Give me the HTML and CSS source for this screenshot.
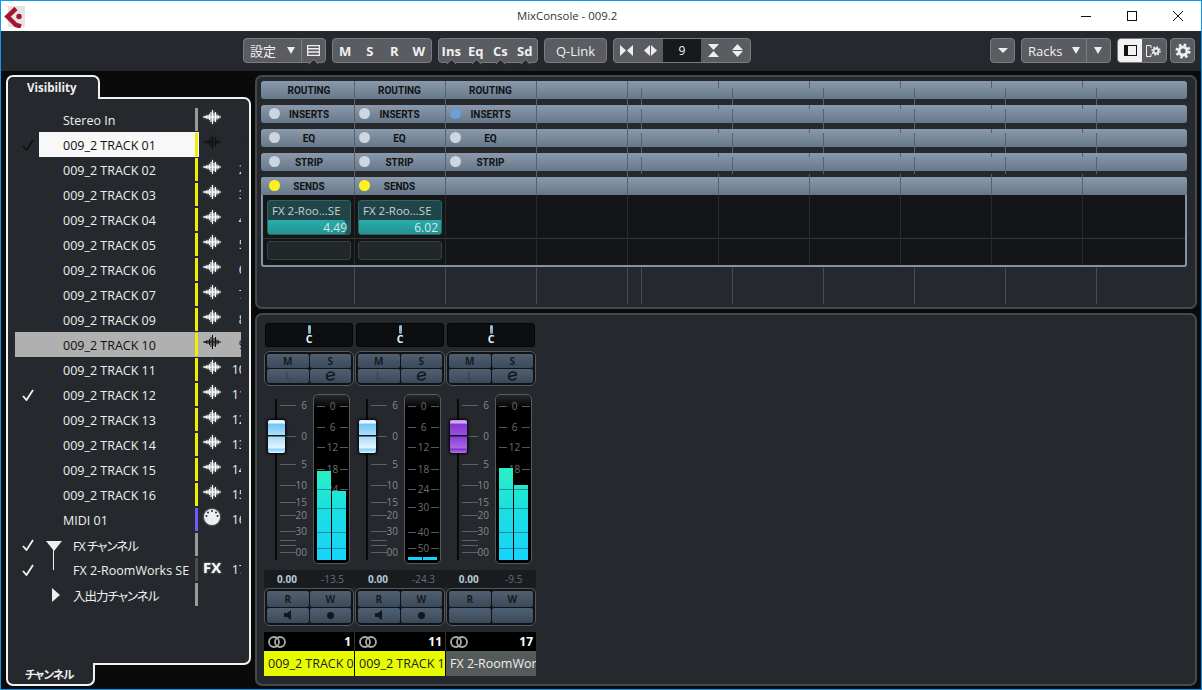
FILE: index.html
```html
<!DOCTYPE html>
<html lang="ja">
<head>
    <meta charset="UTF-8">
    <title>MixConsole - 009.2</title>
    <link rel="stylesheet" href="styles.css">
</head>
<body>
    <svg class="defs" width="0" height="0">
        <symbol id="wave" viewBox="0 0 18 14">
            <path d="M0 7H18M2 6v2M3.500 5.500v3M5 5v4M6.500 4v6M8 2v10M9.500 0v14M11 3v8M12.500 2v10M14 4.500v5M15.500 5.500v3" fill="none" stroke="currentColor" stroke-width="1"/>
        </symbol>
        <symbol id="check" viewBox="0 0 12 12">
            <path d="M1 7l3.500 4L11 1" fill="none" stroke="currentColor" stroke-width="1.800"/>
        </symbol>
        <symbol id="link" viewBox="0 0 18 12">
            <circle cx="6" cy="6" r="5" fill="none" stroke="#aaa" stroke-width="1.800"/>
            <circle cx="12" cy="6" r="5" fill="none" stroke="#aaa" stroke-width="1.800"/>
        </symbol>
        <symbol id="edit" viewBox="0 0 14 12">
            <path d="M3 6.500L12 4.500C12 2.500 10 1 8 1C4.500 1 2 3.500 2 6.500C2 9.500 4 11 7 11C9 11 10.500 10 12 8.500" fill="none" stroke="#14181c" stroke-width="2"/>
        </symbol>
        <symbol id="gear" viewBox="0 0 16 16">
            <circle cx="8" cy="8" r="4" fill="none" stroke="currentColor" stroke-width="3"/>
            <circle cx="8" cy="8" r="6.300" fill="none" stroke="currentColor" stroke-width="2.600" stroke-dasharray="2.500 2.450"/>
        </symbol>
    </svg>

    <div class="window">
        <div class="titlebar">
            <svg class="logo" width="22" height="22" viewBox="0 0 22 22">
                <rect x="4" y="0" width="17" height="21" fill="#e4e4e4"/>
                <path d="M12 2.500L3.500 10.500L12 19L17 20.500" fill="none" stroke="#a6142f" stroke-width="4.500"/>
                <circle cx="15" cy="10.500" r="2.700" fill="#a6142f"/>
            </svg>
            <div class="title">MixConsole - 009.2</div>
            <div class="win-controls">
                <div class="win-btn"><svg width="10" height="10"><path d="M0 5.500H10" stroke="#111"/></svg></div>
                <div class="win-btn"><svg width="10" height="10"><rect x=".5" y=".5" width="9" height="9" fill="none" stroke="#111"/></svg></div>
                <div class="win-btn"><svg width="10" height="10"><path d="M0 0L10 10M10 0L0 10" stroke="#111"/></svg></div>
            </div>
        </div>

        <div class="toolbar">
            <div class="tb-group">
                <div class="tb-cell tb-preset">設定 <span class="tri"></span></div>
                <div class="tb-cell tb-narrow tb-split notch">
                    <svg width="13" height="11"><path d="M.5.500h12v10H.500zM.500 3.800h12M.500 7h12" fill="none" stroke="#eee" stroke-width="1.500"/></svg>
                </div>
            </div>
            <div class="tb-group">
                <div class="tb-cell tb-narrow">M</div>
                <div class="tb-cell tb-narrow">S</div>
                <div class="tb-cell tb-narrow">R</div>
                <div class="tb-cell tb-narrow">W</div>
            </div>
            <div class="tb-group">
                <div class="tb-cell tb-narrow notch">Ins</div>
                <div class="tb-cell tb-narrow notch">Eq</div>
                <div class="tb-cell tb-narrow notch">Cs</div>
                <div class="tb-cell tb-narrow notch">Sd</div>
            </div>
            <div class="tb-group">
                <div class="tb-cell tb-qlink">Q-Link</div>
            </div>
            <div class="tb-group">
                <div class="tb-cell tb-narrow"><svg width="13" height="11"><path d="M0 0l6 5.500L0 11zM13 0L7 5.500l6 5.500z" fill="#eee"/></svg></div>
                <div class="tb-cell tb-narrow"><svg width="13" height="11"><path d="M6 0L0 5.500 6 11zM7 0l6 5.500L7 11z" fill="#eee"/></svg></div>
                <div class="tb-count">9</div>
                <div class="tb-cell tb-narrow"><svg width="11" height="13"><path d="M0 0h11L5.500 6zM0 13h11L5.500 7z" fill="#eee"/></svg></div>
                <div class="tb-cell tb-narrow"><svg width="11" height="13"><path d="M0 6h11L5.500 0zM0 7h11l-5.500 6z" fill="#eee"/></svg></div>
            </div>

            <div class="tb-right">
                <div class="tb-group">
                    <div class="tb-cell tb-single"><span class="tri tri-wide"></span></div>
                </div>
                <div class="tb-group">
                    <div class="tb-cell tb-racks">Racks <span class="tri"></span></div>
                    <div class="tb-cell tb-narrow tb-split"><span class="tri"></span></div>
                </div>
                <div class="tb-group tb-view">
                    <div class="tb-cell tb-narrow tb-white">
                        <svg width="13" height="11"><rect x=".5" y=".5" width="12" height="10" fill="none" stroke="#111"/><rect x="1" y="1" width="3" height="9" fill="#111"/></svg>
                    </div>
                    <div class="tb-cell tb-narrow">
                        <svg width="16" height="12" viewBox="0 0 16 12"><path d="M5 .500H.500v11H5" fill="none" stroke="#eee"/><path d="M5 .500V3M5 9v2.500" stroke="#eee"/><use href="#gear" x="5" y="1" width="10" height="10" color="#eee"/></svg>
                    </div>
                </div>
                <div class="tb-group tb-gear">
                    <svg class="gear-icon" width="16" height="16"><use href="#gear"/></svg>
                </div>
            </div>
        </div>

        <div class="main">
            <div class="left-panel">
                <div class="tab-top">Visibility</div>
                <div class="channel-list">
                    <div class="row"><span class="check"></span><span class="name">Stereo In</span><span class="color c-gray"></span><svg class="icon"><use href="#wave"/></svg><span class="num"></span></div>
                    <div class="row row-on"><span class="check"><svg class="tick dark"><use href="#check"/></svg></span><span class="name">009_2 TRACK 01</span><span class="color c-yellow"></span><svg class="icon dark"><use href="#wave"/></svg><span class="num dark">1</span></div>
                    <div class="row"><span class="check"></span><span class="name">009_2 TRACK 02</span><span class="color c-yellow"></span><svg class="icon"><use href="#wave"/></svg><span class="num">2</span></div>
                    <div class="row"><span class="check"></span><span class="name">009_2 TRACK 03</span><span class="color c-yellow"></span><svg class="icon"><use href="#wave"/></svg><span class="num">3</span></div>
                    <div class="row"><span class="check"></span><span class="name">009_2 TRACK 04</span><span class="color c-yellow"></span><svg class="icon"><use href="#wave"/></svg><span class="num">4</span></div>
                    <div class="row"><span class="check"></span><span class="name">009_2 TRACK 05</span><span class="color c-yellow"></span><svg class="icon"><use href="#wave"/></svg><span class="num">5</span></div>
                    <div class="row"><span class="check"></span><span class="name">009_2 TRACK 06</span><span class="color c-yellow"></span><svg class="icon"><use href="#wave"/></svg><span class="num">6</span></div>
                    <div class="row"><span class="check"></span><span class="name">009_2 TRACK 07</span><span class="color c-yellow"></span><svg class="icon"><use href="#wave"/></svg><span class="num">7</span></div>
                    <div class="row"><span class="check"></span><span class="name">009_2 TRACK 09</span><span class="color c-yellow"></span><svg class="icon"><use href="#wave"/></svg><span class="num">8</span></div>
                    <div class="row row-sel"><span class="check"></span><span class="name">009_2 TRACK 10</span><span class="color c-yellow"></span><svg class="icon dark"><use href="#wave"/></svg><span class="num dark">9</span></div>
                    <div class="row"><span class="check"></span><span class="name">009_2 TRACK 11</span><span class="color c-yellow"></span><svg class="icon"><use href="#wave"/></svg><span class="num">10</span></div>
                    <div class="row"><span class="check"><svg class="tick"><use href="#check"/></svg></span><span class="name">009_2 TRACK 12</span><span class="color c-yellow"></span><svg class="icon"><use href="#wave"/></svg><span class="num">11</span></div>
                    <div class="row"><span class="check"></span><span class="name">009_2 TRACK 13</span><span class="color c-yellow"></span><svg class="icon"><use href="#wave"/></svg><span class="num">12</span></div>
                    <div class="row"><span class="check"></span><span class="name">009_2 TRACK 14</span><span class="color c-yellow"></span><svg class="icon"><use href="#wave"/></svg><span class="num">13</span></div>
                    <div class="row"><span class="check"></span><span class="name">009_2 TRACK 15</span><span class="color c-yellow"></span><svg class="icon"><use href="#wave"/></svg><span class="num">14</span></div>
                    <div class="row"><span class="check"></span><span class="name">009_2 TRACK 16</span><span class="color c-yellow"></span><svg class="icon"><use href="#wave"/></svg><span class="num">15</span></div>
                    <div class="row"><span class="check"></span><span class="name">MIDI 01</span><span class="color c-blue"></span>
                        <svg class="icon midi" viewBox="0 0 18 18"><circle cx="9" cy="9" r="8" fill="#eee"/><g fill="#26292d"><circle cx="3.500" cy="8" r="1"/><circle cx="5" cy="4.500" r="1"/><circle cx="9" cy="3" r="1"/><circle cx="13" cy="4.500" r="1"/><circle cx="14.500" cy="8" r="1"/></g></svg>
                        <span class="num">16</span></div>
                    <div class="row"><span class="check"><svg class="tick"><use href="#check"/></svg></span><span class="name name-tree"><svg class="tree" width="34" height="25"><path d="M7 9h16l-8 10z" fill="#eee"/><path d="M14.500 16v9" stroke="#eee"/></svg><span class="kana">FX チャンネル</span></span><span class="color c-gray"></span><span class="icon"></span><span class="num"></span></div>
                    <div class="row"><span class="check"><svg class="tick"><use href="#check"/></svg></span><span class="name name-tree"><svg class="tree" width="34" height="25"><path d="M14.500 0v13" stroke="#eee"/></svg>FX 2-RoomWorks SE</span><span class="color c-dark"></span><span class="icon fx">FX</span><span class="num">17</span></div>
                    <div class="row"><span class="check"></span><span class="name name-tree"><svg class="tree" width="34" height="25"><path d="M13 6l8 7L13 20z" fill="#eee"/></svg><span class="kana">入出力チャンネル</span></span><span class="color c-gray"></span><span class="icon"></span><span class="num"></span></div>
                </div>
                <div class="tab-bottom"><span class="kana">チャンネル</span></div>
            </div>

            <div class="right-col">
                <div class="rack-panel">
                    <div class="rack-row"><div class="rack-cell">ROUTING</div><div class="rack-cell">ROUTING</div><div class="rack-cell">ROUTING</div></div>
                    <div class="rack-row"><div class="rack-cell"><span class="led"></span>INSERTS</div><div class="rack-cell"><span class="led"></span>INSERTS</div><div class="rack-cell"><span class="led led-blue"></span>INSERTS</div></div>
                    <div class="rack-row"><div class="rack-cell"><span class="led"></span>EQ</div><div class="rack-cell"><span class="led"></span>EQ</div><div class="rack-cell"><span class="led"></span>EQ</div></div>
                    <div class="rack-row"><div class="rack-cell"><span class="led"></span>STRIP</div><div class="rack-cell"><span class="led"></span>STRIP</div><div class="rack-cell"><span class="led"></span>STRIP</div></div>
                    <div class="sends">
                        <div class="rack-row rack-head"><div class="rack-cell"><span class="led led-yellow"></span>SENDS</div><div class="rack-cell"><span class="led led-yellow"></span>SENDS</div><div class="rack-cell"></div></div>
                        <div class="send-row">
                            <div class="send-slot">
                                <div class="send-name">FX 2-Roo...SE</div>
                                <div class="send-level"><div class="send-fill" style="width:78px"></div><span>4.49</span></div>
                            </div>
                            <div class="send-slot">
                                <div class="send-name">FX 2-Roo...SE</div>
                                <div class="send-level"><div class="send-fill" style="width:84px"></div><span>6.02</span></div>
                            </div>
                        </div>
                        <div class="send-row send-row-empty">
                            <div class="send-empty"></div>
                            <div class="send-empty"></div>
                        </div>
                    </div>
                    <svg class="grid-overlay" width="942" height="234" viewBox="255 75 942 234">
                        <defs>
                            <path id="main-line" d="M.5 81V195" stroke="#56636f"/>
                            <path id="dim-line" d="M.5 195V265" stroke="#282c30"/>
                            <path id="low-line" d="M.5 268V304" stroke="#4a4e52"/>
                            <path id="short-tick" d="M.5 81V88M.5 105V109M.5 129V133M.5 153V157M.5 174V195" stroke="#56636f"/>
                            <path id="offset-tick" d="M.5 88V105M.5 109V129M.5 133V153M.5 157V174" stroke="#56636f"/>
                        </defs>
                        <use href="#main-line" x="354"/><use href="#main-line" x="445"/><use href="#main-line" x="536"/><use href="#main-line" x="627"/>
                        <use href="#short-tick" x="718"/><use href="#short-tick" x="809"/><use href="#short-tick" x="900"/><use href="#short-tick" x="991"/><use href="#short-tick" x="1082"/>
                        <use href="#offset-tick" x="641"/><use href="#offset-tick" x="732"/><use href="#offset-tick" x="823"/><use href="#offset-tick" x="914"/><use href="#offset-tick" x="1005"/><use href="#offset-tick" x="1096"/>
                        <use href="#dim-line" x="354"/><use href="#dim-line" x="445"/><use href="#dim-line" x="536"/><use href="#dim-line" x="627"/><use href="#dim-line" x="718"/><use href="#dim-line" x="809"/><use href="#dim-line" x="900"/><use href="#dim-line" x="991"/><use href="#dim-line" x="1082"/>
                        <use href="#low-line" x="354"/><use href="#low-line" x="445"/><use href="#low-line" x="536"/><use href="#low-line" x="627"/><use href="#low-line" x="641"/><use href="#low-line" x="732"/><use href="#low-line" x="823"/><use href="#low-line" x="914"/><use href="#low-line" x="1005"/><use href="#low-line" x="1096"/>
                    </svg>
                </div>

                <div class="fader-panel">
                    <!-- channel 1 -->
                    <div class="strip">
                        <div class="pan"><span class="pan-knob"></span><span class="pan-label">C</span></div>
                        <div class="btn-box ms-box">
                            <div class="btn">M</div><div class="btn">S</div>
                            <div class="btn btn-off">L</div><div class="btn"><svg width="11" height="10"><use href="#edit"/></svg></div>
                        </div>
                        <div class="fader-area">
                            <div class="fader">
                                <div class="fader-track"></div>
                                <span class="mark" style="top:5px">6</span>
                                <span class="mark" style="top:36px">0</span>
                                <span class="mark" style="top:64px">5</span>
                                <span class="mark" style="top:85px">10</span>
                                <span class="mark" style="top:102px">15</span>
                                <span class="mark" style="top:115px">20</span>
                                <span class="mark" style="top:131px">30</span>
                                <span class="mark" style="top:140px"></span>
                                <span class="mark" style="top:145px"></span>
                                <span class="mark" style="top:152px">00</span>
                                <div class="thumb"></div>
                            </div>
                            <div class="meter">
                                <span class="m-mark" style="top:5px">0</span>
                                <span class="m-mark" style="top:26px">6</span>
                                <span class="m-mark" style="top:46px">12</span>
                                <span class="m-mark" style="top:68px">18</span>
                                <span class="m-mark" style="top:88px">24</span>
                                <div class="bar bar-l" style="height:89px"></div>
                                <div class="bar bar-r" style="height:69px"></div>
                            </div>
                        </div>
                        <div class="values"><b>0.00</b><span>-13.5</span></div>
                        <div class="btn-box rw-box">
                            <div class="btn">R</div><div class="btn">W</div>
                            <div class="btn"><svg width="8" height="10"><path d="M0 3h3l4-3v10L3 7H0z" fill="#14181c"/></svg></div><div class="btn"><span class="rec-dot"></span></div>
                        </div>
                        <div class="strip-head"><svg width="18" height="12"><use href="#link"/></svg><b>1</b></div>
                        <div class="strip-name n-yellow">009_2 TRACK 01</div>
                    </div>
                    <!-- channel 2 -->
                    <div class="strip">
                        <div class="pan"><span class="pan-knob"></span><span class="pan-label">C</span></div>
                        <div class="btn-box ms-box">
                            <div class="btn">M</div><div class="btn">S</div>
                            <div class="btn btn-off">L</div><div class="btn"><svg width="11" height="10"><use href="#edit"/></svg></div>
                        </div>
                        <div class="fader-area">
                            <div class="fader">
                                <div class="fader-track"></div>
                                <span class="mark" style="top:5px">6</span>
                                <span class="mark" style="top:36px">0</span>
                                <span class="mark" style="top:64px">5</span>
                                <span class="mark" style="top:85px">10</span>
                                <span class="mark" style="top:102px">15</span>
                                <span class="mark" style="top:115px">20</span>
                                <span class="mark" style="top:131px">30</span>
                                <span class="mark" style="top:140px"></span>
                                <span class="mark" style="top:145px"></span>
                                <span class="mark" style="top:152px">00</span>
                                <div class="thumb"></div>
                            </div>
                            <div class="meter">
                                <span class="m-mark" style="top:5px">0</span>
                                <span class="m-mark" style="top:26px">6</span>
                                <span class="m-mark" style="top:46px">12</span>
                                <span class="m-mark" style="top:68px">18</span>
                                <span class="m-mark" style="top:88px">24</span>
                                <span class="m-mark" style="top:106px">30</span>
                                <span class="m-mark" style="top:131px">40</span>
                                <span class="m-mark" style="top:147px">50</span>
                                <div class="bar bar-l" style="height:3px"></div>
                                <div class="bar bar-r" style="height:3px"></div>
                            </div>
                        </div>
                        <div class="values"><b>0.00</b><span>-24.3</span></div>
                        <div class="btn-box rw-box">
                            <div class="btn">R</div><div class="btn">W</div>
                            <div class="btn"><svg width="8" height="10"><path d="M0 3h3l4-3v10L3 7H0z" fill="#14181c"/></svg></div><div class="btn"><span class="rec-dot"></span></div>
                        </div>
                        <div class="strip-head"><svg width="18" height="12"><use href="#link"/></svg><b>11</b></div>
                        <div class="strip-name n-yellow">009_2 TRACK 12</div>
                    </div>
                    <!-- channel 3 -->
                    <div class="strip">
                        <div class="pan"><span class="pan-knob"></span><span class="pan-label">C</span></div>
                        <div class="btn-box ms-box">
                            <div class="btn">M</div><div class="btn">S</div>
                            <div class="btn btn-off">L</div><div class="btn"><svg width="11" height="10"><use href="#edit"/></svg></div>
                        </div>
                        <div class="fader-area">
                            <div class="fader">
                                <div class="fader-track"></div>
                                <span class="mark" style="top:5px">6</span>
                                <span class="mark" style="top:36px">0</span>
                                <span class="mark" style="top:64px">5</span>
                                <span class="mark" style="top:85px">10</span>
                                <span class="mark" style="top:102px">15</span>
                                <span class="mark" style="top:115px">20</span>
                                <span class="mark" style="top:131px">30</span>
                                <span class="mark" style="top:140px"></span>
                                <span class="mark" style="top:145px"></span>
                                <span class="mark" style="top:152px">00</span>
                                <div class="thumb thumb-fx"></div>
                            </div>
                            <div class="meter">
                                <span class="m-mark" style="top:5px">0</span>
                                <span class="m-mark" style="top:26px">6</span>
                                <span class="m-mark" style="top:46px">12</span>
                                <span class="m-mark" style="top:68px">18</span>
                                <div class="bar bar-l" style="height:92px"></div>
                                <div class="bar bar-r" style="height:75px"></div>
                            </div>
                        </div>
                        <div class="values"><b>0.00</b><span>-9.5</span></div>
                        <div class="btn-box rw-box">
                            <div class="btn">R</div><div class="btn">W</div>
                            <div class="btn"></div><div class="btn"></div>
                        </div>
                        <div class="strip-head"><svg width="18" height="12"><use href="#link"/></svg><b>17</b></div>
                        <div class="strip-name n-fx">FX 2-RoomWorks SE</div>
                    </div>
                </div>
            </div>
        </div>
    </div>
</body>
</html>
```

FILE: styles.css
```css
:root {
    --panel: #25292d;
    --edge: #46494c;
    --btn: #5a5c61;
    --btn-edge: #7a7c80;
    --text: #f0f0f0;
    --yellow: #eef000;
}

* {
    box-sizing: border-box;
}

body {
    margin: 0;
    font-family: 'Open Sans', 'Noto Sans CJK JP', sans-serif;
    background: #000;
}

.defs {
    position: absolute;
}

.window {
    width: 1202px;
    height: 690px;
    border: 1px solid #0a9bf0;
    display: flex;
    flex-direction: column;
    overflow: hidden;
}

/* title bar */
.titlebar {
    height: 30px;
    background: #fff;
    display: flex;
    align-items: center;
}

.logo {
    margin-left: 3px;
    margin-top: 1px;
}

.title {
    margin-left: 491px;
    margin-bottom: 2px;
    font-size: 11.4px;
    color: #333;
}

.win-controls {
    margin-left: auto;
    display: flex;
}

.win-btn {
    width: 46px;
    height: 30px;
    display: flex;
    align-items: center;
    justify-content: center;
}

/* toolbar */
.toolbar {
    height: 40px;
    background: var(--panel);
    display: flex;
    gap: 6px;
    padding: 7px 6px 8px 242px;
}

.tb-group {
    height: 25px;
    background: var(--btn);
    border: 1px solid var(--btn-edge);
    border-radius: 4px;
    display: flex;
    color: var(--text);
    font-size: 13px;
    font-weight: 700;
}

.tb-cell {
    position: relative;
    display: flex;
    align-items: center;
    justify-content: center;
}

.tb-narrow {
    width: 24.5px;
}

.tb-single {
    width: 23px;
}

.tb-split {
    border-left: 1px solid var(--btn-edge);
}

.tb-preset {
    width: 56.5px;
    font-weight: 400;
    justify-content: space-between;
    padding: 0 6px;
}

.tb-racks {
    width: 63.5px;
    font-weight: 400;
    justify-content: space-between;
    padding: 0 6px;
}

.tb-qlink {
    width: 61px;
    font-weight: 400;
}

.tb-count {
    width: 38px;
    background: #17191c;
    display: flex;
    align-items: center;
    justify-content: center;
    font-weight: 400;
    font-size: 12px;
}

.tb-white {
    background: #f2f2f2;
    border-radius: 3px 0 0 3px;
}

.tb-right {
    margin-left: auto;
    display: flex;
    gap: 6px;
}

.tb-view {
    width: 50px;
}

.tb-gear {
    width: 25px;
    margin-left: -3px;
    align-items: center;
    justify-content: center;
}

.gear-icon {
    color: #eee;
}

.tri {
    width: 0;
    height: 0;
    border-left: 4.5px solid transparent;
    border-right: 4.5px solid transparent;
    border-top: 7px solid #eee;
}

.tri-wide {
    border-left-width: 5.5px;
    border-right-width: 5.5px;
    border-top-width: 5px;
}

.notch::after {
    content: '';
    position: absolute;
    bottom: -5px;
    left: 50%;
    width: 6px;
    height: 6px;
    margin-left: -3px;
    background: var(--panel);
    border-left: 1px solid var(--btn-edge);
    border-top: 1px solid var(--btn-edge);
    transform: rotate(45deg);
}

/* main area */
.main {
    flex: 1;
    background: #0a0a0a;
    display: flex;
    gap: 4px;
    padding: 4px 4px 3px 5px;
}

/* channel list */
.left-panel {
    width: 245px;
    display: flex;
    flex-direction: column;
    font-size: 12.5px;
    font-feature-settings: "palt";
    color: var(--text);
}

.kana {
    letter-spacing: -1px;
}

.tab-top {
    position: relative;
    z-index: 1;
    width: 94px;
    height: 24px;
    margin-bottom: -2px;
    padding: 3px 0 0 19px;
    background: var(--panel);
    border: 2px solid #f2f2f2;
    border-bottom: none;
    border-radius: 7px 7px 0 0;
    font-size: 11.5px;
    font-weight: 700;
}

.channel-list {
    flex: 1;
    background: var(--panel);
    border: 2px solid #f2f2f2;
    border-radius: 0 7px 7px 0;
    padding: 8px 0 0 7px;
}

.tab-bottom {
    position: relative;
    z-index: 1;
    width: 89px;
    height: 23px;
    margin-top: -2px;
    padding: 3px 0 0 17px;
    background: var(--panel);
    border: 2px solid #f2f2f2;
    border-top: none;
    border-radius: 0 0 7px 7px;
    font-size: 11.5px;
    font-weight: 700;
}

.row {
    width: 226px;
    height: 25px;
    display: flex;
    align-items: stretch;
    overflow: hidden;
}

.check {
    width: 24px;
    flex: none;
    display: flex;
    align-items: center;
    padding-left: 7px;
}

.tick {
    width: 12px;
    height: 12px;
    color: #f2f2f2;
}

.name {
    width: 156px;
    flex: none;
    padding: 1px 0 0 24px;
    white-space: nowrap;
    overflow: hidden;
    display: flex;
    align-items: center;
}

.name-tree {
    padding-left: 0;
}

.tree {
    flex: none;
    margin-top: -1px;
}

.color {
    width: 3px;
    flex: none;
    margin: 1px 0;
}

.c-gray { background: #98999a; }
.c-yellow { background: var(--yellow); }
.c-blue { background: #6a5cf5; }
.c-dark { background: #4a4d50; }

.icon {
    width: 18px;
    height: 14px;
    flex: none;
    margin: 3px 0 0 5px;
    color: #fff;
    filter: drop-shadow(0 0 1px rgba(255, 255, 255, 0.5));
}

.midi {
    height: 18px;
    margin-top: 1px;
}

.fx {
    font-size: 15px;
    font-weight: 700;
    line-height: 14px;
    white-space: nowrap;
}

.num {
    width: 25px;
    flex: none;
    line-height: 26px;
    text-align: right;
}

.dark {
    color: #111;
    filter: none;
}

.row-on .name {
    background: #f8f8f8;
    color: #111;
}

.row-on .color {
    box-shadow: 1px 0 0 #f8f8f8;
    margin: 0;
    border: solid #f8f8f8;
    border-width: 1px 0;
}

.row-sel {
    background: #b0b0b0;
}

.row-sel .name {
    color: #111;
}

/* rack panel */
.right-col {
    width: 942px;
    display: flex;
    flex-direction: column;
    gap: 4px;
}

.rack-panel {
    position: relative;
    height: 234px;
    background: var(--panel);
    border: 2px solid var(--edge);
    border-radius: 7px;
    padding: 4px 8px 0 4px;
    display: flex;
    flex-direction: column;
    gap: 6px;
}

.grid-overlay {
    position: absolute;
    left: -2px;
    top: -2px;
    pointer-events: none;
}

.rack-row {
    height: 18px;
    flex: none;
    display: flex;
    background: linear-gradient(#8a9aac, #66788a);
    border-radius: 3px;
    font-family: Roboto, sans-serif;
    font-size: 10px;
    font-weight: 700;
    color: #111;
}

.rack-cell {
    position: relative;
    width: 91px;
    flex: none;
    display: flex;
    align-items: center;
    justify-content: center;
}

.rack-cell:first-child {
    width: 93px;
    padding-left: 3px;
}

.led {
    position: absolute;
    left: 5px;
    top: 3px;
    width: 11px;
    height: 11px;
    border-radius: 50%;
    background: #cdd6e0;
}

.rack-cell:first-child .led {
    left: 8px;
}

.led-blue { background: #6d9ed8; }
.led-yellow { background: #fdf21e; }

.sends {
    height: 90px;
    background: #131517;
    border: 2px solid #8294a8;
    border-top: none;
    border-radius: 3px;
}

.rack-head {
    margin: 0 -2px;
    border-radius: 3px 3px 0 0;
}

.send-row {
    display: flex;
    gap: 7px;
    padding: 5px 4px 3px;
    border-bottom: 1px solid #33373a;
}

.send-row-empty {
    padding: 2px 4px 0;
    border-bottom: none;
}

.send-slot {
    width: 84px;
    height: 35px;
    background: #1f4548;
    border: 1px solid #2e6263;
    border-radius: 3px;
    overflow: hidden;
}

.send-name {
    height: 19px;
    padding-left: 4px;
    font-size: 11.5px;
    line-height: 19px;
    color: #c8d2d2;
    white-space: nowrap;
}

.send-level {
    position: relative;
    height: 15px;
    margin: 0 -1px;
    background: #1f5c5e;
    font-size: 12px;
    line-height: 15px;
    text-align: right;
    color: #d8e8e8;
}

.send-fill {
    position: absolute;
    left: 0;
    top: 0;
    bottom: 0;
    background: linear-gradient(#2bacac, #23908f);
    border-radius: 2px;
}

.send-level span {
    position: relative;
    padding-right: 4px;
}

.send-empty {
    width: 84px;
    height: 19px;
    background: #22272a;
    border: 1px solid #3a3f42;
    border-radius: 3px;
}

/* fader panel */
.fader-panel {
    flex: 1;
    background: var(--panel);
    border: 2px solid var(--edge);
    border-radius: 7px;
    padding: 8px 0 0 7px;
    display: flex;
}

.strip {
    width: 91px;
    display: flex;
    flex-direction: column;
}

.pan {
    width: 88px;
    height: 24px;
    margin-left: 1px;
    background: #0d0e10;
    border: 1px solid #050505;
    border-radius: 3px;
    display: flex;
    flex-direction: column;
    align-items: center;
    padding-top: 1px;
}

.pan-knob {
    flex: none;
    width: 3px;
    height: 9px;
    border-radius: 2px;
    background: linear-gradient(#a8c8dc, #6f9fc0);
}

.pan-label {
    font-size: 10.5px;
    font-weight: 700;
    line-height: 11px;
    color: #e8f4ff;
}

.btn-box {
    width: 90px;
    background: #101214;
    border: 1px solid #55585c;
    border-radius: 6px;
    padding: 2px;
    display: grid;
    grid-template-columns: 1fr 1fr;
    grid-template-rows: 1fr 1fr;
    gap: 1px;
}

.ms-box {
    height: 35px;
    margin-top: 4px;
}

.rw-box {
    height: 38px;
}

.btn {
    background: linear-gradient(#4f6072, #3b4a5a);
    border-radius: 2px;
    display: flex;
    align-items: center;
    justify-content: center;
    font-size: 10px;
    font-weight: 700;
    color: #181a1c;
}

.btn-off {
    color: #394552;
}

.rec-dot {
    width: 7px;
    height: 7px;
    border-radius: 50%;
    background: #14181c;
}

.fader-area {
    height: 171px;
    margin-top: 8px;
    display: flex;
}

.fader {
    position: relative;
    width: 49px;
    flex: none;
}

.fader-track {
    position: absolute;
    left: 11px;
    top: 5px;
    width: 2px;
    height: 161px;
    background: #08090a;
}

.mark {
    position: absolute;
    left: 16px;
    width: 27px;
    height: 12px;
    font-size: 10px;
    line-height: 12px;
    text-align: right;
    color: #85888c;
}

.mark::before {
    content: '';
    position: absolute;
    left: 0;
    top: 6px;
    width: 16px;
    height: 1px;
    background: #5d6064;
}

.thumb {
    position: absolute;
    left: 4px;
    top: 26px;
    width: 17px;
    height: 33px;
    border-radius: 2px;
    box-shadow: 0 0 3px 1px #000;
    background: linear-gradient(#d8f0ff 0, #f4fbff 3px, #6cc4f6 4px, #b0defa 15px, #101820 15px, #101820 16px, #a8dcfa 17px, #e4f4ff 28px, #7fd0fa 29px, #aee0fc 31px, #e8f6ff 33px);
}

.thumb-fx {
    background: linear-gradient(#c48cf0 0, #d8b0f4 3px, #8436d4 4px, #9a50dc 15px, #101018 15px, #101018 16px, #8a3cd8 17px, #a868e4 28px, #7a2cc8 29px, #b07ce8 33px);
}

.meter {
    position: relative;
    width: 37px;
    height: 170px;
    background: linear-gradient(#26282a, #000 14px);
    border: 1px solid #55585c;
    border-radius: 5px;
}

.m-mark {
    position: absolute;
    left: 3px;
    width: 31px;
    height: 12px;
    font-size: 10px;
    line-height: 12px;
    text-align: center;
    color: #6c6f72;
}

.m-mark::before,
.m-mark::after {
    content: '';
    position: absolute;
    top: 6px;
    width: 8px;
    height: 1px;
    background: #55585c;
}

.m-mark::before {
    left: 0;
}

.m-mark::after {
    right: 0;
}

.bar {
    position: absolute;
    bottom: 3px;
    width: 14px;
    background:
        linear-gradient(#1b8f9c, #1b8f9c) bottom 11px left / 100% 1px no-repeat,
        linear-gradient(#1b8f9c, #1b8f9c) bottom 27px left / 100% 1px no-repeat,
        linear-gradient(#1b8f9c, #1b8f9c) bottom 51px left / 100% 1px no-repeat,
        linear-gradient(#1b8f9c, #1b8f9c) bottom 70px left / 100% 1px no-repeat,
        linear-gradient(#2cf2bf, #1be0e0 45%, #18d2fa) bottom / 100% 96px no-repeat;
}

.bar-l {
    left: 3px;
}

.bar-r {
    left: 18px;
}

.values {
    height: 18px;
    margin-top: 5px;
    background: #191c1f;
    display: flex;
    align-items: center;
    font-size: 10px;
}

.values b {
    width: 46px;
    text-align: center;
    color: #b8c8d8;
}

.values span {
    width: 45px;
    text-align: center;
    color: #666e78;
}

.strip-head {
    height: 19px;
    margin-top: 6px;
    background: #000;
    border-right: 1px solid #333;
    display: flex;
    align-items: center;
    justify-content: space-between;
    padding: 0 3px 0 4px;
    color: #fff;
    font-size: 12px;
}

.strip-name {
    height: 25px;
    border-right: 1px solid #000;
    padding: 0 3px 0 4px;
    font-size: 12.5px;
    line-height: 25px;
    white-space: nowrap;
    overflow: hidden;
}

.strip:last-child .strip-head,
.strip:last-child .strip-name,
.strip:last-child .values {
    width: 90px;
    border-right: none;
}

.n-yellow {
    background: #e8fc00;
    color: #222;
}

.n-fx {
    background: #555a5b;
    color: #eee;
}
```
